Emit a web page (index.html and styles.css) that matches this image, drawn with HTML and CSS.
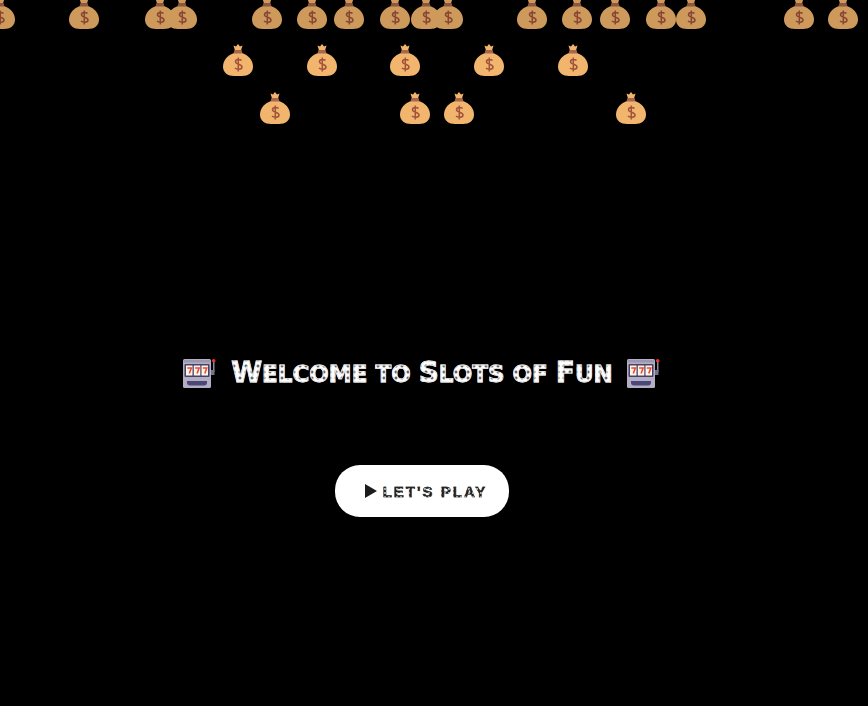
FILE: index.html
```html
<!DOCTYPE html>
<html lang="en">
<head>
    <meta charset="UTF-8">
    <meta name="viewport" content="width=device-width, initial-scale=1.0">
    <title>Slots of Fun</title>
    <link rel="stylesheet" href="styles.css">
</head>
<body>

    <svg width="0" height="0" class="defs">
        <defs>
            <symbol id="bag" viewBox="0 0 32 34">
                <path d="M12 10C6 12 1 17 1 23.500 1 30 6 33 12 33h8c6 0 11-3 11-9.500C31 17 26 12 20 10z" fill="#f2b56d"/>
                <path d="M11.500 2.500l2.500 1 2-2.500 2 2.500 2.500-1-1.500 5h-6z" fill="#f2b56d"/>
                <path d="M12.500 7h7l1 3.500h-9z" fill="#a8664a"/>
                <path d="M19.500 17.500c-1-1.200-6-1.700-6 1.200 0 3 6.500 2 6.500 5.300 0 3-5.500 2.600-7 1M16.300 14.500v14" fill="none" stroke="#a0523c" stroke-width="1.500"/>
            </symbol>
            <symbol id="slot" viewBox="0 0 34 31">
                <rect x="30" y="3" width="1.500" height="11" fill="#8d8a9c"/>
                <circle cx="30.700" cy="2.800" r="1.800" fill="#e8322e"/>
                <rect x="28" y="12" width="3.500" height="5" fill="#77748a"/>
                <rect x="0" y="1" width="28" height="29" rx="1.500" fill="#b3aec3"/>
                <rect x="1" y="2" width="26" height="2.500" fill="#9c97b0"/>
                <rect x="1.500" y="6" width="25" height="13" rx="1" fill="#45426a"/>
                <rect x="3" y="7.500" width="6.500" height="10" fill="#fdf6e6"/>
                <rect x="10.800" y="7.500" width="6.500" height="10" fill="#fdf6e6"/>
                <rect x="18.500" y="7.500" width="6.500" height="10" fill="#fdf6e6"/>
                <path d="M4.300 10h4l-2 5.500M12.100 10h4l-2 5.500M19.800 10h4l-2 5.500" fill="none" stroke="#ea4a3c" stroke-width="1.600"/>
                <path d="M4 23h20v1.500c0 2-1 3-3 3H7c-2 0-3-1-3-3z" fill="#4b4878"/>
            </symbol>
        </defs>
    </svg>

    <!-- Falling money bags -->
    <svg class="rain" width="868" height="706">
        <g opacity="0.85">
            <use href="#bag" x="-16" y="-4" width="32" height="34"/>
            <use href="#bag" x="68" y="-4" width="32" height="34"/>
            <use href="#bag" x="144" y="-4" width="32" height="34"/>
            <use href="#bag" x="166" y="-4" width="32" height="34"/>
            <use href="#bag" x="251" y="-4" width="32" height="34"/>
            <use href="#bag" x="296" y="-4" width="32" height="34"/>
            <use href="#bag" x="333" y="-4" width="32" height="34"/>
            <use href="#bag" x="379" y="-4" width="32" height="34"/>
            <use href="#bag" x="410" y="-4" width="32" height="34"/>
            <use href="#bag" x="432" y="-4" width="32" height="34"/>
            <use href="#bag" x="516" y="-4" width="32" height="34"/>
            <use href="#bag" x="561" y="-4" width="32" height="34"/>
            <use href="#bag" x="599" y="-4" width="32" height="34"/>
            <use href="#bag" x="645" y="-4" width="32" height="34"/>
            <use href="#bag" x="675" y="-4" width="32" height="34"/>
            <use href="#bag" x="783" y="-4" width="32" height="34"/>
            <use href="#bag" x="827" y="-4" width="32" height="34"/>
        </g>
        <use href="#bag" x="222" y="43" width="32" height="34"/>
        <use href="#bag" x="306" y="43" width="32" height="34"/>
        <use href="#bag" x="389" y="43" width="32" height="34"/>
        <use href="#bag" x="473" y="43" width="32" height="34"/>
        <use href="#bag" x="557" y="43" width="32" height="34"/>
        <use href="#bag" x="259" y="91" width="32" height="34"/>
        <use href="#bag" x="399" y="91" width="32" height="34"/>
        <use href="#bag" x="443" y="91" width="32" height="34"/>
        <use href="#bag" x="615" y="91" width="32" height="34"/>
    </svg>

    <div class="welcome">
        <h1 class="title">
            <svg class="slot-icon" width="34" height="31"><use href="#slot"/></svg>
            <span class="title-text"><span class="cap">W</span>elcome to <span class="cap">S</span>lots of <span class="cap">F</span>un</span>
            <svg class="slot-icon" width="34" height="31"><use href="#slot"/></svg>
        </h1>
        <button class="play-button">
            <svg width="12" height="14" viewBox="0 0 12 14"><path d="M0 0l12 7-12 7z" fill="#1c1c1c"/></svg>
            <span class="play-text">Let's Play</span>
        </button>
    </div>

</body>
</html>
```

FILE: styles.css
```css
* {
    box-sizing: border-box;
    margin: 0;
    padding: 0;
}
html, body {
    height: 100%;
}
body {
    background-color: #000;
    overflow: hidden;
    position: relative;
    font-family: "DejaVu Sans", sans-serif;
}
.defs {
    position: absolute;
}
.rain {
    position: absolute;
    top: 0;
    left: 0;
}
.welcome {
    display: flex;
    flex-direction: column;
    align-items: center;
    padding-top: 358px;
    padding-right: 24px;
    gap: 76px;
}
.title {
    display: flex;
    align-items: center;
    gap: 14px;
    height: 31px;
    font-weight: 700;
}
.title-text {
    font-size: 23px;
    line-height: 31px;
    text-transform: uppercase;
    white-space: nowrap;
    color: transparent;
    -webkit-text-stroke: 0.8px #e4e4e4;
    background-image: radial-gradient(circle, #666 1.2px, #fff 1.8px);
    background-size: 6px 6px;
    -webkit-background-clip: text;
    background-clip: text;
}
.cap {
    font-size: 28px;
}
.play-button {
    display: flex;
    align-items: center;
    justify-content: center;
    gap: 6px;
    width: 174px;
    height: 52px;
    padding-left: 8px;
    background-color: #fff;
    border: none;
    border-radius: 25px;
    font-family: inherit;
}
.play-text {
    font-family: "Liberation Sans", sans-serif;
    font-size: 15px;
    font-weight: 700;
    letter-spacing: 2px;
    text-transform: uppercase;
    white-space: nowrap;
    color: transparent;
    -webkit-text-stroke: 0.4px #333;
    background-image: radial-gradient(circle, #bbb 0.8px, #222 1.2px);
    background-size: 4px 4px;
    -webkit-background-clip: text;
    background-clip: text;
}
```
